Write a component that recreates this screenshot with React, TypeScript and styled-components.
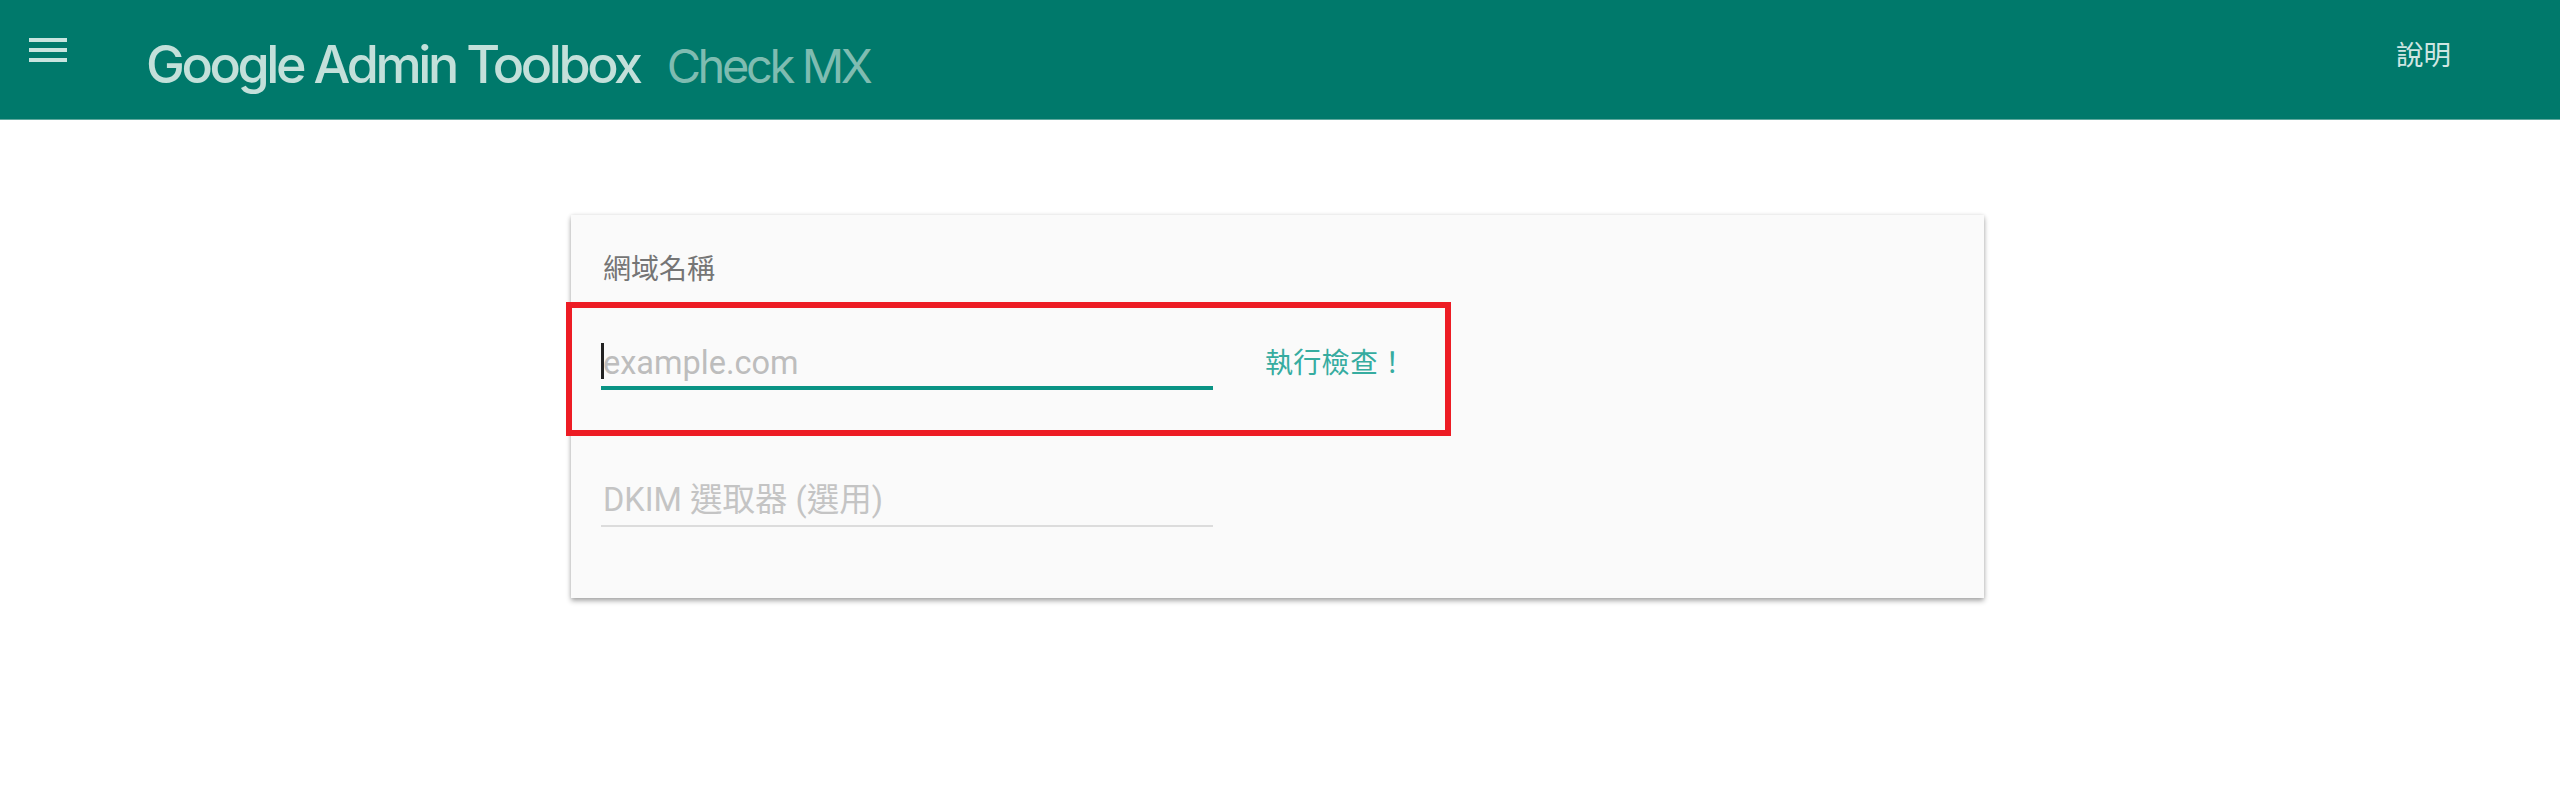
import React from "react";
import styled, { createGlobalStyle } from "styled-components";

const Global = createGlobalStyle`
  html, body { margin: 0; padding: 0; background: #fff; }
  body { font-family: Roboto, "Noto Sans CJK TC", sans-serif; overflow: hidden; }
`;

const Page = styled.div`
  width: 2560px;
  height: 802px;
  display: flex;
  flex-direction: column;
`;

const Header = styled.header`
  height: 120px;
  flex: none;
  background: #00796b;
  border-bottom: 1px solid #5fa89d;
  display: flex;
  align-items: flex-start;
  padding-left: 29px;
  padding-right: 109px;
  box-sizing: border-box;
`;

const MenuButton = styled.div`
  width: 38px;
  height: 40px;
  margin-top: 30px;
  color: #c9e4df;
  flex: none;
`;

const Title = styled.div`
  margin-left: 79px;
  margin-top: 29px;
  font-family: Inter, Lato, sans-serif;
  font-weight: 500;
  font-size: 52px;
  line-height: 72px;
  letter-spacing: -3.4px;
  color: #c3e0da;
  white-space: nowrap;
`;

const Subtitle = styled.span`
  margin-left: 27px;
  font-size: 47px;
  font-weight: 400;
  color: #7fbcb1;
`;

const HelpLink = styled.a`
  margin-left: auto;
  margin-top: 33px;
  font-family: "Noto Sans CJK TC", sans-serif;
  font-size: 27.5px;
  font-weight: 400;
  line-height: 40px;
  color: #cfe6e2;
`;

const Main = styled.main`
  padding: 95px 0 0 571px;
`;

const Card = styled.section`
  position: relative;
  width: 1413px;
  height: 383px;
  box-sizing: border-box;
  background: #fafafa;
  padding: 31px 32px 0 30px;
  box-shadow: 0 3px 5px rgba(0, 0, 0, 0.32), 0 0 4px rgba(0, 0, 0, 0.1);
`;

const Label = styled.div`
  font-family: "Noto Sans CJK TC", sans-serif;
  font-size: 28px;
  font-weight: 400;
  line-height: 42px;
  color: #757575;
  padding-left: 2px;
`;

const Row = styled.div<{ $first?: boolean }>`
  display: flex;
  align-items: flex-start;
  margin-top: ${(p) => (p.$first ? "53px" : "89px")};
`;

const Field = styled.div<{ $active?: boolean }>`
  position: relative;
  width: 612px;
  height: ${(p) => (p.$active ? "49px" : "48px")};
  box-sizing: border-box;
  border-bottom: ${(p) => (p.$active ? "4px solid #0a9384" : "2px solid #dcdcdc")};
  padding-left: 2px;
  font-size: 32.5px;
  line-height: ${(p) => (p.$active ? "45px" : "43px")};
  color: ${(p) => (p.$active ? "#bdbdbd" : "#c4c4c4")};
  white-space: nowrap;
`;

const Caret = styled.span`
  position: absolute;
  left: 0;
  top: 2px;
  width: 3px;
  height: 36px;
  background: #222;
`;

const CheckButton = styled.button`
  margin-left: 52px;
  margin-top: -1px;
  padding: 0;
  border: 0;
  background: none;
  font-family: "Noto Sans CJK TC", sans-serif;
  font-size: 28px;
  font-weight: 400;
  line-height: 42px;
  letter-spacing: 0.3px;
  color: #36aca0;
  white-space: nowrap;
`;

const Highlight = styled.div`
  position: absolute;
  left: -5px;
  top: 87px;
  width: 885px;
  height: 134px;
  box-sizing: border-box;
  border: 6px solid #ed1c24;
  pointer-events: none;
`;

export default function App() {
  return (
    <Page>
      <Global />
      <Header>
        <MenuButton>
          <svg width="38" height="40" viewBox="0 0 38 40" fill="currentColor">
            <rect x="0" y="8" width="38" height="4" />
            <rect x="0" y="18" width="38" height="4" />
            <rect x="0" y="28" width="38" height="4" />
          </svg>
        </MenuButton>
        <Title>
          Google Admin Toolbox<Subtitle>Check MX</Subtitle>
        </Title>
        <HelpLink>說明</HelpLink>
      </Header>
      <Main>
        <Card>
          <Label>網域名稱</Label>
          <Row $first>
            <Field $active>
              <Caret />
              example.com
            </Field>
            <CheckButton>執行檢查！</CheckButton>
          </Row>
          <Row>
            <Field>DKIM 選取器 (選用)</Field>
          </Row>
          <Highlight />
        </Card>
      </Main>
    </Page>
  );
}
